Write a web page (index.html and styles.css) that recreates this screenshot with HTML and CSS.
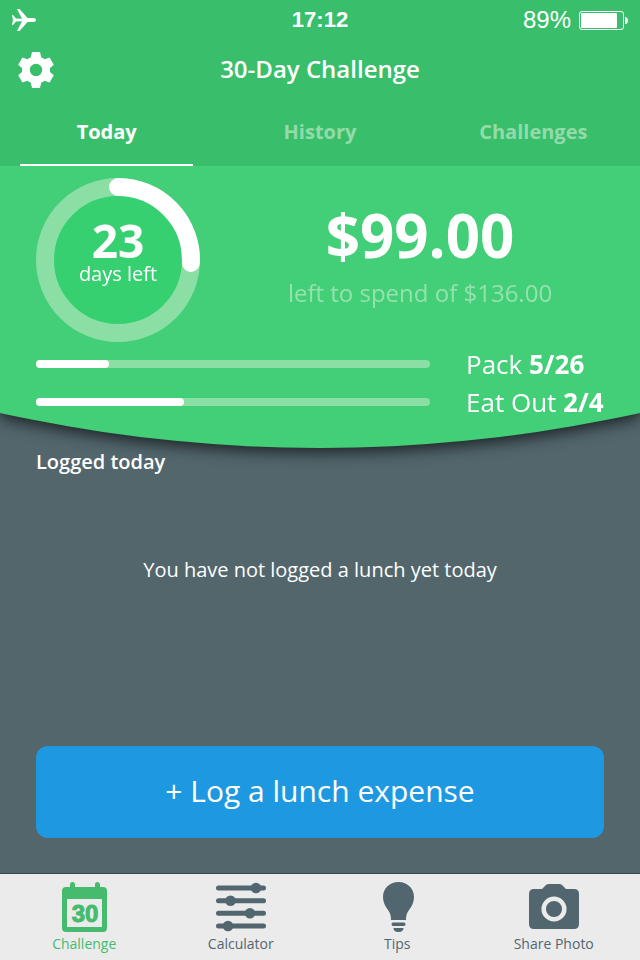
FILE: index.html
```
<!DOCTYPE html>
<html lang="en">
<head>
    <meta charset="UTF-8">
    <meta name="viewport" content="width=device-width, initial-scale=1.0">
    <title>30-Day Challenge</title>
    <link rel="stylesheet" href="styles.css">
</head>
<body>
    <header class="top">
        <div class="status-bar">
            <svg class="plane" viewBox="0 0 24 22" aria-label="Airplane mode">
                <path d="M0 6h1l3 3.500 6 .2L5 0h2.500l8 9H22q2 .5 2 2t-2 2h-6.500l-8 9H5l5-9.700-6 .2L1 16H0l1-5z" fill="#fff"/>
            </svg>
            <span class="clock">17:12</span>
            <div class="power">
                <span>89%</span>
                <svg class="battery" viewBox="0 0 49 19" aria-hidden="true">
                    <rect x=".5" y=".5" width="44" height="18" rx="2.5" fill="none" stroke="#fff"/>
                    <rect x="2" y="2" width="36" height="15" rx="1" fill="#fff"/>
                    <path d="M46 6h1q2 1 2 3.500t-2 3.500h-1z" fill="#fff"/>
                </svg>
            </div>
        </div>
        <div class="title-bar">
            <button class="settings" type="button" aria-label="Settings">
                <svg viewBox="0 0 36 36" aria-hidden="true">
                    <path fill="#fff" fill-rule="evenodd" d="M14 0h8l1.200 5.200 3.600 2.100 4.800-1.800 4.200 7.300-3.800 3.200v4l3.800 3.200-4.200 7.300-4.800-1.800-3.600 2.100L22 36h-8l-1.200-5.200-3.600-2.100-4.800 1.800L.2 23.200 4 20v-4L.2 12.800l4.200-7.300 4.800 1.800 3.600-2.100zM18 11.800a6.200 6.200 0 1 0 0 12.400 6.200 6.200 0 0 0 0-12.400z"/>
                </svg>
            </button>
            <h1>30-Day Challenge</h1>
        </div>
        <nav class="tabs">
            <a href="#today" class="tab active">Today</a>
            <a href="#history" class="tab">History</a>
            <a href="#challenges" class="tab">Challenges</a>
        </nav>
    </header>

    <section class="summary-shadow">
        <div class="summary" id="today">
            <div class="overview">
                <div class="ring">
                    <svg viewBox="0 0 164 164" aria-hidden="true">
                        <circle cx="82" cy="82" r="73" fill="#36d070" stroke="#8bdfa4" stroke-width="18"/>
                        <path d="M82 9A73 73 0 0 1 154.900 85" fill="none" stroke="#fff" stroke-width="18" stroke-linecap="round"/>
                    </svg>
                    <div class="ring-text">
                        <strong>23</strong>
                        <span>days left</span>
                    </div>
                </div>
                <div class="budget">
                    <strong>$99.00</strong>
                    <span>left to spend of $136.00</span>
                </div>
            </div>
            <div class="goal">
                <div class="bar"><div class="bar-fill" style="width: 18.5%"></div></div>
                <span class="goal-label">Pack <b>5/26</b></span>
            </div>
            <div class="goal">
                <div class="bar"><div class="bar-fill" style="width: 37.5%"></div></div>
                <span class="goal-label">Eat Out <b>2/4</b></span>
            </div>
        </div>
    </section>

    <main class="log">
        <h2>Logged today</h2>
        <p>You have not logged a lunch yet today</p>
        <button class="log-button" type="button">+ Log a lunch expense</button>
    </main>

    <nav class="bottom-nav">
        <a href="#challenge" class="nav-item current">
            <svg viewBox="0 0 50 50" aria-hidden="true">
                <path fill="currentColor" fill-rule="evenodd" d="M11 5V2.500a2.500 2.500 0 0 1 5 0V5h20V2.500a2.500 2.500 0 0 1 5 0V5h3q4 0 4 4v37q0 4-4 4H7q-4 0-4-4V9q0-4 4-4zM8 17v28h35V17z"/>
                <text x="26" y="40" text-anchor="middle" class="icon-day">30</text>
            </svg>
            <span>Challenge</span>
        </a>
        <a href="#calculator" class="nav-item">
            <svg viewBox="0 0 50 50" aria-hidden="true">
                <path d="M2.500 6h45M2.500 18.700h45M2.500 31.300h45M2.500 44h45" stroke="currentColor" stroke-width="5" stroke-linecap="round"/>
                <g fill="currentColor">
                    <circle cx="40" cy="6" r="5.300"/>
                    <circle cx="14.500" cy="18.700" r="5.300"/>
                    <circle cx="34" cy="31.300" r="5.300"/>
                    <circle cx="12" cy="44" r="5.300"/>
                </g>
            </svg>
            <span>Calculator</span>
        </a>
        <a href="#tips" class="nav-item">
            <svg viewBox="0 0 50 50" aria-hidden="true">
                <path fill="currentColor" d="M26.500 0C17 0 11 7 11 15c0 5 2 9 5 13 2.500 3.500 3 6 3 10h15c0-4 .5-6.500 3-10 3-4 5-8 5-13 0-8-6-15-15.500-15zM21 40.500h11q1.500 0 1.500 1.700T32 44H21q-1.500 0-1.500-1.800t1.500-1.700zM21.500 46h10q0 4-5 4t-5-4z"/>
            </svg>
            <span>Tips</span>
        </a>
        <a href="#share" class="nav-item">
            <svg viewBox="0 0 50 50" aria-hidden="true">
                <path fill="currentColor" d="M5 7h8l4-4q1-1 3-1h10q2 0 3 1l4 4h8q5 0 5 5v30q0 5-5 5H5q-5 0-5-5V12q0-5 5-5z"/>
                <circle cx="25" cy="27" r="10.300" fill="none" stroke="#ebebeb" stroke-width="4.500"/>
            </svg>
            <span>Share Photo</span>
        </a>
    </nav>
</body>
</html>
```
FILE: styles.css
```
* {
    box-sizing: border-box;
}

body {
    margin: 0;
    min-height: 100vh;
    display: flex;
    flex-direction: column;
    font-family: "Open Sans", "Noto Sans", sans-serif;
    background-color: #52666c;
    color: #fff;
}

h1, h2, p {
    margin: 0;
}

a {
    color: inherit;
    text-decoration: none;
}

button {
    border: none;
    color: inherit;
    font-family: inherit;
    cursor: pointer;
}

svg {
    display: block;
}

/* Header */
.top {
    position: relative;
    z-index: 2;
    background-color: #39bf6b;
}

.status-bar {
    display: grid;
    grid-template-columns: 1fr auto 1fr;
    align-items: center;
    height: 40px;
    padding: 0 12px;
    font-family: "Liberation Sans", Arial, sans-serif;
    font-size: 24px;
}

.plane {
    width: 24px;
    height: 22px;
}

.clock {
    font-size: 22px;
    font-weight: bold;
}

.power {
    display: flex;
    justify-content: flex-end;
    align-items: center;
    gap: 8px;
}

.battery {
    width: 49px;
    height: 19px;
}

.title-bar {
    display: grid;
    grid-template-columns: 36px 1fr 36px;
    align-items: center;
    height: 60px;
    padding: 0 18px;
}

.settings {
    width: 36px;
    height: 36px;
    padding: 0;
    background: none;
}

h1 {
    padding-bottom: 4px;
    font-size: 24px;
    font-weight: 600;
    text-align: center;
}

.tabs {
    display: grid;
    grid-template-columns: repeat(3, 1fr);
}

.tab {
    height: 66px;
    margin: 0 20px;
    line-height: 64px;
    text-align: center;
    font-size: 20px;
    font-weight: bold;
    color: #93dba9;
    border-bottom: 2px solid transparent;
}

.tab.active {
    color: #fff;
    border-bottom-color: #fff;
}

/* Green panel with the curved bottom edge */
.summary-shadow {
    position: relative;
    z-index: 1;
    filter: drop-shadow(0 4px 8px rgba(0, 0, 0, 0.7));
}

.summary {
    padding: 12px 36px 27px;
    background-color: #43ce78;
    clip-path: ellipse(231% 1480px at 50% calc(100% - 1480px));
}

.overview {
    display: flex;
    gap: 36px;
    margin-bottom: 3px;
}

.ring {
    display: grid;
    width: 164px;
    height: 164px;
}

.ring > * {
    grid-area: 1 / 1;
}

.ring-text {
    display: flex;
    flex-direction: column;
    align-items: center;
    padding-top: 38px;
}

.ring-text strong {
    font-size: 46px;
    line-height: 48px;
}

.ring-text span {
    font-size: 20px;
    line-height: 20px;
}

.budget {
    flex: 1;
    display: flex;
    flex-direction: column;
    align-items: center;
    padding-top: 25px;
}

.budget strong {
    font-size: 60px;
    line-height: 64px;
}

.budget span {
    font-size: 24px;
    line-height: 52px;
    color: #95e2ae;
}

.goal {
    display: grid;
    grid-template-columns: 1fr 138px;
    gap: 36px;
    align-items: center;
    height: 38px;
}

.bar {
    height: 8px;
    border-radius: 4px;
    background-color: #8bdfa4;
}

.bar-fill {
    height: 8px;
    border-radius: 4px;
    background-color: #fff;
}

.goal-label {
    font-size: 26px;
    white-space: nowrap;
}

.goal-label b {
    font-weight: bold;
}

/* Lunch log */
.log {
    flex: 1;
    display: flex;
    flex-direction: column;
    padding: 0 36px 35px;
}

h2 {
    font-size: 20px;
    font-weight: 600;
    line-height: 28px;
}

.log p {
    margin-top: 80px;
    text-align: center;
    font-size: 20px;
    line-height: 28px;
}

.log-button {
    height: 92px;
    padding: 0 0 4px;
    margin-top: auto;
    border-radius: 12px;
    background-color: #1e98e0;
    font-size: 30px;
}

/* Bottom navigation */
.bottom-nav {
    display: grid;
    grid-template-columns: repeat(4, 1fr);
    height: 87px;
    padding: 8px 8px 0 6px;
    border-top: 1px solid #364850;
    background-color: #ebebeb;
    color: #52666f;
}

.nav-item {
    display: flex;
    flex-direction: column;
    align-items: center;
    font-size: 14px;
    line-height: 24px;
}

.nav-item svg {
    width: 50px;
    height: 50px;
}

.current {
    color: #47bb6d;
}

.icon-day {
    font-family: "Liberation Sans", Arial, sans-serif;
    font-size: 24px;
    font-weight: bold;
    fill: currentColor;
    stroke: currentColor;
}
```
